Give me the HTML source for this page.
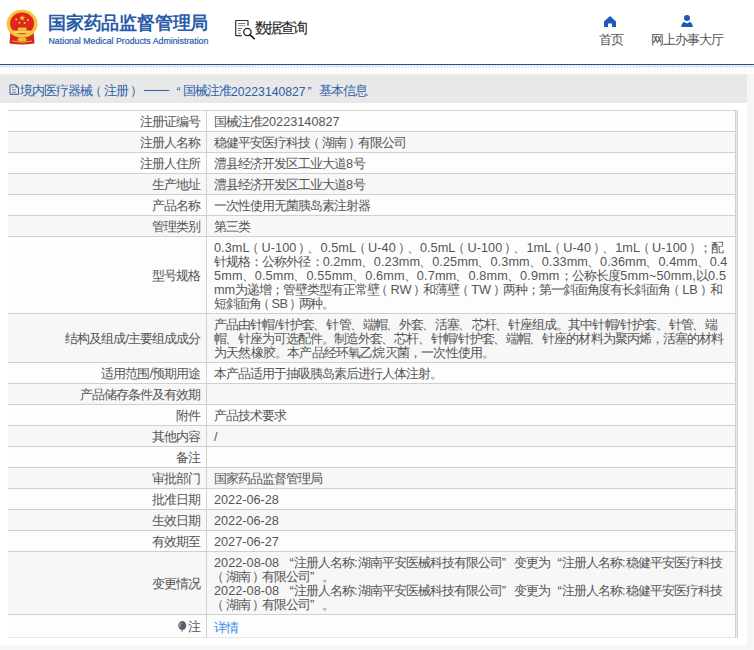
<!DOCTYPE html>
<html><head><meta charset="utf-8">
<style>
html,body{margin:0;padding:0;}
body{width:754px;height:650px;overflow:hidden;background:#f6f6f6;font-family:"Liberation Sans",sans-serif;position:relative;color:#555;}
.abs{position:absolute;}
.hdr{left:0;top:0;width:754px;height:64px;background:#fff;}
.bline{left:0;top:64px;width:754px;height:1px;background:#2a5282;border-bottom:1px solid #dcf0f9;}
.hatch{left:0;top:66px;width:754px;height:8px;background:repeating-linear-gradient(90deg,rgba(120,160,215,0.4) 0 1.5px,transparent 1.5px 3px) 0 0/754px 1px no-repeat,repeating-linear-gradient(90deg,rgba(140,160,190,0.2) 0 1.5px,transparent 1.5px 3px) 1.5px 1px/754px 1px no-repeat,repeating-linear-gradient(90deg,rgba(150,170,200,0.07) 0 1.5px,transparent 1.5px 3px) 0 3px/754px 3px no-repeat,#fff;}
.bar{left:0;top:74px;width:747px;height:28px;border-top:1px solid #f1eeee;background:#e8e8e8;}
.box{left:0;top:103px;width:747px;height:542px;background:#fff;}
.ttl{left:48px;top:11px;font-size:18px;letter-spacing:-0.2px;font-weight:bold;color:#2a5caa;white-space:nowrap;}
.eng{left:48.5px;top:36px;font-size:8.8px;color:#2a5caa;-webkit-text-stroke:0.2px #2a5caa;white-space:nowrap;}
.sj{left:254.5px;top:19px;font-size:15px;letter-spacing:-2.2px;color:#2a2a2a;-webkit-text-stroke:0.1px #2a2a2a;white-space:nowrap;}
.nav{font-size:13px;letter-spacing:-1px;color:#555;white-space:nowrap;}
.bt{left:0.5px;top:83px;width:400px;height:16px;font-size:13px;letter-spacing:-1px;line-height:16px;color:#2c5fa8;white-space:nowrap;}
.bt>span{position:absolute;top:0;}
.bt .lt{font-size:12.2px;letter-spacing:0;top:0.5px;}
.m{font-size:12.2px;}
table.t{position:absolute;left:8px;top:110px;width:728px;border-collapse:separate;table-layout:fixed;border-spacing:0;font-size:13px;line-height:14px;border-top:1px solid #d0d0d0;}
.t td{border-bottom:1px solid #d0d0d0;border-right:1px solid #d0d0d0;padding:3px 0 3px 7px;vertical-align:middle;height:14px;}
.t td.l{width:192px;letter-spacing:-1px;text-align:right;padding-right:6px;padding-left:0;}
.t tr:nth-child(odd) td{background:#fdfdfd;}
.t tr:nth-child(even) td{background:#f7f7f7;}
.t tr.last td{height:16px;border-bottom-color:#e6e6e6;}
.lb{position:relative;top:1px;}
.ln{white-space:nowrap;position:relative;top:0.8px;--ls:0px;letter-spacing:calc(var(--ls) - 1px);}
.n{font-size:12.7px;letter-spacing:var(--ls);position:relative;top:0px;}
.ql,.qr{display:inline-block;width:12px;letter-spacing:0;text-align:right;}
.qr{text-align:left;}
.pl{position:relative;left:-3.5px;}
.dn{position:relative;left:-1px;}
.pr{position:relative;left:2px;}
.lk{color:#3a8ee6;position:relative;top:1px;}
.pin{vertical-align:-1px;margin-right:1px;}
.rb{left:736px;top:110px;width:1px;height:528px;background:#e9e9ee;border-right:1px solid #cdcdd3;}
</style></head><body>
<div class="abs hdr"></div>
<svg class="abs" style="left:0;top:0" width="46" height="50" viewBox="0 0 46 50">
  <path d="M10.5 32 L9.5 43.5 Q22 45.5 34.5 43.5 L33.5 32 Z" fill="#d8281e"/>
  <ellipse cx="22.1" cy="39.6" rx="4.5" ry="2.2" fill="#eab83a"/>
  <path d="M12 41 Q22 43.5 32 41" stroke="#eab83a" stroke-width="0.9" fill="none"/>
  <ellipse cx="22.1" cy="23.8" rx="15.5" ry="14" fill="#f3c63a"/>
  <ellipse cx="22.1" cy="23.4" rx="12" ry="10.8" fill="#e0261d"/>
  <path d="M22.2 15 L23 17 L25 17.1 L23.4 18.4 L24 20.4 L22.2 19.2 L20.4 20.4 L21 18.4 L19.4 17.1 L21.4 17 Z" fill="#f5d040"/>
  <circle cx="16.3" cy="19.6" r="1" fill="#f5d040"/>
  <circle cx="19.4" cy="22.7" r="1" fill="#f5d040"/>
  <circle cx="24.6" cy="23" r="1" fill="#f5d040"/>
  <circle cx="28" cy="19.9" r="1" fill="#f5d040"/>
  <rect x="18" y="27.6" width="8.5" height="3" fill="#f3c63a"/>
  <rect x="13.5" y="30.6" width="17" height="2.6" fill="#f7d45a"/>
</svg>
<div class="abs ttl">国家药品监督管理局</div>
<div class="abs eng">National Medical Products Administration</div>
<svg class="abs" style="left:232px;top:16px" width="26" height="26" viewBox="0 0 26 26">
  <path d="M9.8 19.7 H4.3 Q3.7 19.7 3.7 19.1 V5.1 Q3.7 4.5 4.3 4.5 H15.4 Q16 4.5 16 5.1 V9.8" fill="none" stroke="#333" stroke-width="1.2"/>
  <path d="M6 7.5 H13.2" stroke="#666" stroke-width="0.9"/>
  <path d="M6 9.6 H13.2" stroke="#888" stroke-width="0.9"/>
  <path d="M6 12.5 H10 M6 14.5 H8.8 M6 17.3 H8.8" stroke="#555" stroke-width="0.8"/>
  <circle cx="15.4" cy="16" r="3.7" fill="#fff" stroke="#222" stroke-width="1.3"/>
  <path d="M18.1 18.8 L22.2 22.7" stroke="#222" stroke-width="1.8" stroke-linecap="round"/>
</svg>
<div class="abs sj">数据查询</div>
<svg class="abs" style="left:604px;top:16px" width="12" height="11" viewBox="0 0 12 11">
  <path d="M6 0 L12 5.5 V11 H8 V7.5 H4 V11 H0 V5.5 Z" fill="#1a5ab8"/>
</svg>
<div class="abs nav" style="left:599px;top:31px">首页</div>
<svg class="abs" style="left:681px;top:15px" width="13" height="12" viewBox="0 0 13 12">
  <circle cx="6" cy="3.1" r="3" fill="#1a5ab8"/>
  <path d="M0.2 12 Q0.6 7.6 3.4 7 L6 8.5 L8.6 7 Q11.4 7.6 11.9 12 Z" fill="#1a5ab8"/>
</svg>
<div class="abs nav" style="left:651px;top:31px">网上办事大厅</div>
<div class="abs bline"></div>
<div class="abs hatch"></div>
<div class="abs bar"></div>
<svg class="abs" style="left:9px;top:84px" width="11" height="12" viewBox="0 0 11 12">
  <path d="M1 0.9 H6.6 L9.5 3.5 V10.3 H1 Z" fill="none" stroke="#3a5592" stroke-width="1"/>
  <path d="M6.4 0.9 V3.6 H9.5 Z" fill="#3a5592"/>
  <path d="M3 3.3 H4.9 M3 5.7 H6.9 M3 8.3 H6.9" stroke="#5d6f9e" stroke-width="0.8"/>
</svg>
<div class="abs bt">
<span style="left:19px">境内医疗器械</span>
<span style="left:91.5px"><span class="pl">（</span>注册<span class="pr">）</span></span>
<span class="lt" style="left:143.5px;font-size:12.6px;top:-1.5px">——</span>
<span class="lt" style="left:176px">“</span>
<span style="left:182px">国械注准</span>
<span class="lt" style="left:230.5px">20223140827</span>
<span class="lt" style="left:307px">”</span>
<span style="left:318.5px">基本信息</span>
</div>
<div class="abs box"></div>
<table class="t">
<tr><td class="l"><span class="lb">注册证编号</span></td><td class="v"><div class="ln">国械注准<span class="n">20223140827</span></div></td></tr>
<tr><td class="l"><span class="lb">注册人名称</span></td><td class="v"><div class="ln">稳健平安医疗科技<span class="pl">（</span>湖南<span class="pr">）</span>有限公司</div></td></tr>
<tr><td class="l"><span class="lb">注册人住所</span></td><td class="v"><div class="ln">澧县经济开发区工业大道<span class="n">8</span>号</div></td></tr>
<tr><td class="l"><span class="lb">生产地址</span></td><td class="v"><div class="ln">澧县经济开发区工业大道<span class="n">8</span>号</div></td></tr>
<tr><td class="l"><span class="lb">产品名称</span></td><td class="v"><div class="ln">一次性使用无菌胰岛素注射器</div></td></tr>
<tr><td class="l"><span class="lb">管理类别</span></td><td class="v"><div class="ln">第三类</div></td></tr>
<tr><td class="l"><span class="lb">型号规格</span></td><td class="v"><div class="ln" style="--ls:0.049px"><span class="n">0.3mL</span><span class="pl">（</span><span class="n">U-100</span><span class="pr">）</span><span class="dn">、</span><span class="n">0.5mL</span><span class="pl">（</span><span class="n">U-40</span><span class="pr">）</span><span class="dn">、</span><span class="n">0.5mL</span><span class="pl">（</span><span class="n">U-100</span><span class="pr">）</span><span class="dn">、</span><span class="n">1mL</span><span class="pl">（</span><span class="n">U-40</span><span class="pr">）</span><span class="dn">、</span><span class="n">1mL</span><span class="pl">（</span><span class="n">U-100</span><span class="pr">）</span>；配</div><div class="ln" style="--ls:0.07px">针规格：公称外径：<span class="n">0.2mm</span><span class="dn">、</span><span class="n">0.23mm</span><span class="dn">、</span><span class="n">0.25mm</span><span class="dn">、</span><span class="n">0.3mm</span><span class="dn">、</span><span class="n">0.33mm</span><span class="dn">、</span><span class="n">0.36mm</span><span class="dn">、</span><span class="n">0.4mm</span><span class="dn">、</span><span class="n">0.4</span></div><div class="ln" style="--ls:0.139px"><span class="n">5mm</span><span class="dn">、</span><span class="n">0.5mm</span><span class="dn">、</span><span class="n">0.55mm</span><span class="dn">、</span><span class="n">0.6mm</span><span class="dn">、</span><span class="n">0.7mm</span><span class="dn">、</span><span class="n">0.8mm</span><span class="dn">、</span><span class="n">0.9mm</span>；公称长度<span class="n">5mm~50mm,</span>以<span class="n">0.5</span></div><div class="ln" style="--ls:-0.042px"><span class="n">mm</span>为递增；管壁类型有正常壁<span class="pl">（</span><span class="n">RW</span><span class="pr">）</span>和薄壁<span class="pl">（</span><span class="n">TW</span><span class="pr">）</span>两种；第一斜面角度有长斜面角<span class="pl">（</span><span class="n">LB</span><span class="pr">）</span>和</div><div class="ln" style="--ls:-0.5px">短斜面角<span class="pl">（</span><span class="n">SB</span><span class="pr">）</span>两种。</div></td></tr>
<tr><td class="l"><span class="lb">结构及组成<span class="n">/</span>主要组成成分</span></td><td class="v"><div class="ln" style="--ls:0.086px">产品由针帽<span class="n">/</span>针护套<span class="dn">、</span>针管<span class="dn">、</span>端帽<span class="dn">、</span>外套<span class="dn">、</span>活塞<span class="dn">、</span>芯杆<span class="dn">、</span>针座组成。其中针帽<span class="n">/</span>针护套<span class="dn">、</span>针管<span class="dn">、</span>端</div><div class="ln" style="--ls:0.029px">帽<span class="dn">、</span>针座为可选配件。制造外套<span class="dn">、</span>芯杆<span class="dn">、</span>针帽<span class="n">/</span>针护套<span class="dn">、</span>端帽<span class="dn">、</span>针座的材料为聚丙烯，活塞的材料</div><div class="ln" style="--ls:0.19px">为天然橡胶。本产品经环氧乙烷灭菌，一次性使用。</div></td></tr>
<tr><td class="l"><span class="lb">适用范围<span class="n">/</span>预期用途</span></td><td class="v"><div class="ln">本产品适用于抽吸胰岛素后进行人体注射。</div></td></tr>
<tr><td class="l"><span class="lb">产品储存条件及有效期</span></td><td class="v"></td></tr>
<tr><td class="l"><span class="lb">附件</span></td><td class="v"><div class="ln">产品技术要求</div></td></tr>
<tr><td class="l"><span class="lb">其他内容</span></td><td class="v"><div class="ln"><span class="n">/</span></div></td></tr>
<tr><td class="l"><span class="lb">备注</span></td><td class="v"></td></tr>
<tr><td class="l"><span class="lb">审批部门</span></td><td class="v"><div class="ln">国家药品监督管理局</div></td></tr>
<tr><td class="l"><span class="lb">批准日期</span></td><td class="v"><div class="ln"><span class="n">2022-06-28</span></div></td></tr>
<tr><td class="l"><span class="lb">生效日期</span></td><td class="v"><div class="ln"><span class="n">2022-06-28</span></div></td></tr>
<tr><td class="l"><span class="lb">有效期至</span></td><td class="v"><div class="ln"><span class="n">2027-06-27</span></div></td></tr>
<tr><td class="l"><span class="lb">变更情况</span></td><td class="v"><div class="ln" style="--ls:0.025px"><span class="n">2022-08-08</span> <span class="ql">“</span>注册人名称<span class="n">:</span>湖南平安医械科技有限公司<span class="qr">”</span>变更为<span class="ql">“</span>注册人名称<span class="n">:</span>稳健平安医疗科技</div><div class="ln"><span class="pl">（</span>湖南<span class="pr">）</span>有限公司<span class="qr">”</span>。</div><div class="ln" style="--ls:0.025px"><span class="n">2022-08-08</span> <span class="ql">“</span>注册人名称<span class="n">:</span>湖南平安医械科技有限公司<span class="qr">”</span>变更为<span class="ql">“</span>注册人名称<span class="n">:</span>稳健平安医疗科技</div><div class="ln"><span class="pl">（</span>湖南<span class="pr">）</span>有限公司<span class="qr">”</span>。</div></td></tr>
<tr class="last"><td class="l"><span class="lb"><svg class="pin" width="9" height="11" viewBox="0 0 9 11"><ellipse cx="4.3" cy="4.6" rx="4" ry="4.5" fill="#56606e"/><path d="M2 5.5 Q1.6 3 3.3 1.8" stroke="#d8d8d8" stroke-width="0.9" fill="none"/><path d="M3.3 10 H5" stroke="#666" stroke-width="1"/></svg>注</span></td><td class="v"><div class="ln"><span class="lk">详情</span></div></td></tr>
</table>
<div class="abs rb"></div>
</body></html>
